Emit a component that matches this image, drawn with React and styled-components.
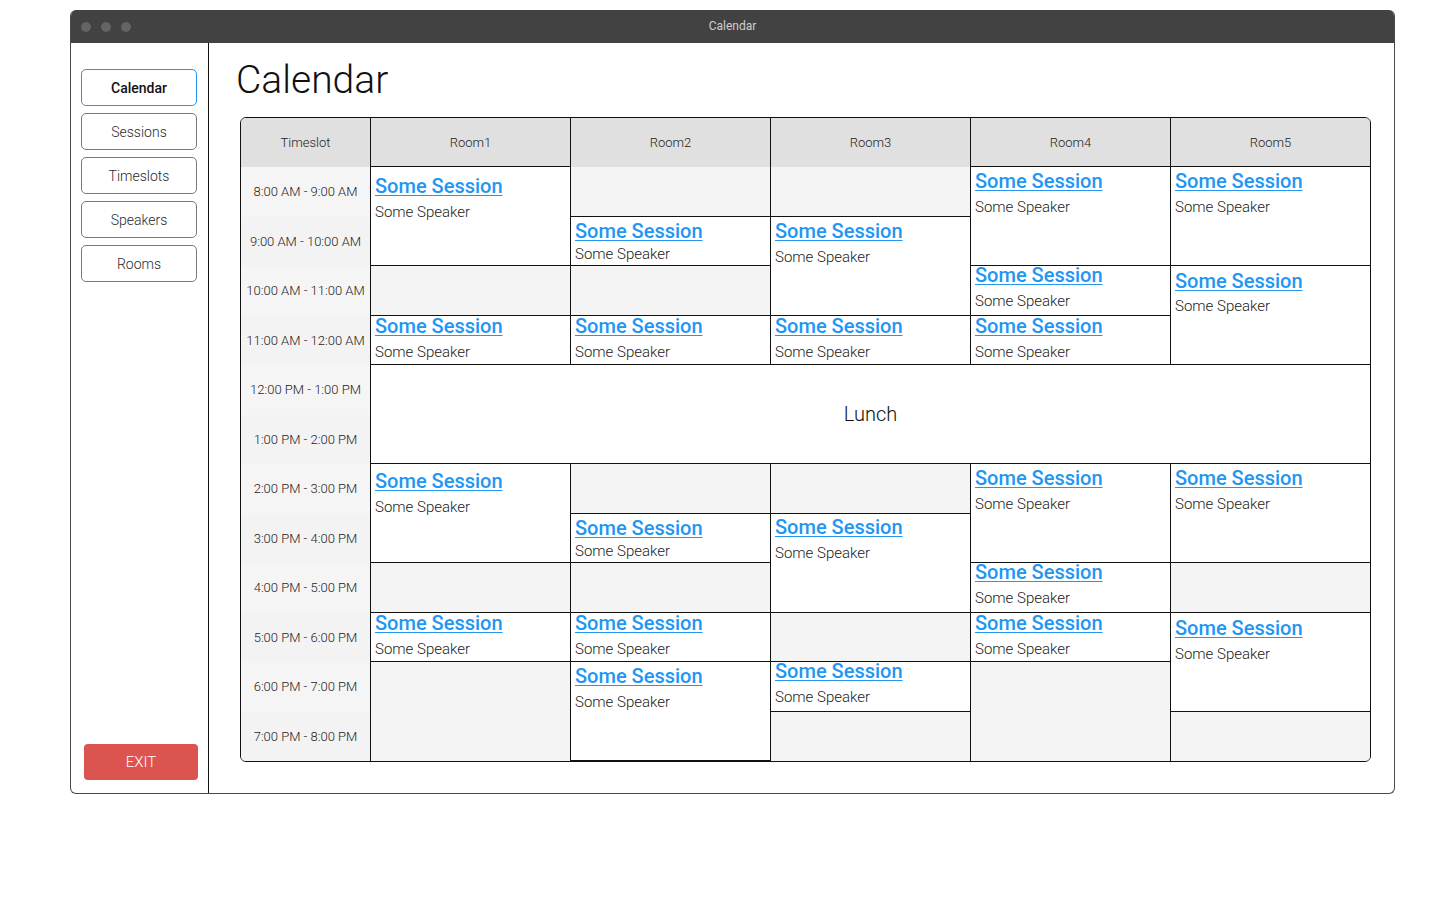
import React from "react";
import styled, { createGlobalStyle } from "styled-components";

const Global = createGlobalStyle`
  html, body { margin: 0; padding: 0; background: #fff; }
  body { font-family: Roboto, "Liberation Sans", sans-serif; }
  * { box-sizing: border-box; }
`;

const Window = styled.div`
  margin: 10px 0 0 70px;
  width: 1325px;
  height: 784px;
  border: 1px solid #4a4a4a;
  border-top: none;
  border-radius: 6px;
  display: flex;
  flex-direction: column;
  overflow: hidden;
`;

const TitleBar = styled.div`
  height: 33px;
  background: #424242;
  display: flex;
  align-items: center;
  position: relative;
  padding-left: 11px;
  gap: 10px;
  margin: 0 -1px;
`;

const Dot = styled.span`
  width: 10px;
  height: 10px;
  border-radius: 50%;
  background: #646464;
`;

const WinTitle = styled.div`
  position: absolute;
  left: 0;
  right: 0;
  top: 9px;
  text-align: center;
  font-size: 12px;
  line-height: 14px;
  color: #cfcfcf;
  font-weight: 400;
  pointer-events: none;
`;

const Body = styled.div`
  flex: 1;
  display: flex;
  min-height: 0;
`;

const Sidebar = styled.nav`
  width: 138px;
  border-right: 1px solid #111;
  display: flex;
  flex-direction: column;
  padding: 26px 0 13px 10px;
  gap: 7px;
`;

const NavButton = styled.button`
  width: 116px;
  height: 37px;
  border: 1px solid ${(p) => (p.$active ? "#2196f3" : "#7a7a7a")};
  border-radius: 5px;
  background: #fff;
  font-family: Roboto, "Liberation Sans", sans-serif;
  font-size: 14px;
  font-weight: ${(p) => (p.$active ? 500 : 300)};
  color: ${(p) => (p.$active ? "#111" : "#2a2a2a")};
  cursor: pointer;
  padding: 0;
`;

const ExitButton = styled.button`
  margin-top: auto;
  margin-left: 3px;
  width: 114px;
  height: 36px;
  border: none;
  border-radius: 4px;
  background: #db5450;
  color: #fff;
  font-family: Roboto, "Liberation Sans", sans-serif;
  font-size: 15px;
  font-weight: 300;
  cursor: pointer;
`;

const Main = styled.main`
  flex: 1;
  padding: 14px 0 0 31px;
`;

const PageTitle = styled.h1`
  margin: 0 0 14px -4px;
  font-size: 39px;
  line-height: 46px;
  font-weight: 300;
  color: #111;
`;

const Table = styled.div`
  display: grid;
  grid-template-columns: 129px repeat(5, 200px);
  grid-template-rows: 49px repeat(12, 49.5px);
  width: 1131px;
  border: 1px solid #111;
  border-radius: 6px;
  overflow: hidden;
  background: #f4f4f4;
`;

const HeadCell = styled.div`
  background: #e0e0e0;
  display: flex;
  align-items: center;
  justify-content: center;
  font-size: 13px;
  font-weight: 300;
  color: #222;
  border-left: ${(p) => (p.$room ? "1px solid #111" : "none")};
  grid-row: 1;
`;

const SlotCell = styled.div`
  grid-column: 1;
  grid-row: ${(p) => p.$row};
  display: flex;
  align-items: center;
  justify-content: center;
  font-size: 13px;
  font-weight: 300;
  color: #1e1e1e;
  background: ${(p) => (p.$odd ? "#f3f3f3" : "#f5f5f5")};
`;

const EmptyCell = styled.div`
  grid-column: ${(p) => p.$col};
  grid-row: ${(p) => p.$row} / span ${(p) => p.$span};
  border-left: 1px solid #111;
  background: #f4f4f4;
`;

const SessionCell = styled.div`
  grid-column: ${(p) => p.$col};
  grid-row: ${(p) => p.$row} / span ${(p) => p.$span};
  margin-top: -1px;
  border: 1px solid #111;
  border-right: none;
  background: #fff;
  padding: ${(p) => p.$pad}px 4px 0 4px;
  display: flex;
  flex-direction: column;
  align-items: flex-start;
  z-index: 1;
`;

const SessionLink = styled.a`
  font-size: 20px;
  line-height: 18px;
  font-weight: 500;
  color: #2196f3;
  text-decoration: underline;
  text-decoration-thickness: 1px;
  text-underline-offset: 2px;
  cursor: pointer;
`;

const Speaker = styled.div`
  font-size: 15px;
  line-height: 20px;
  font-weight: 300;
  color: #222;
  margin-top: ${(p) => p.$gap - 19}px;
`;

const LunchCell = styled.div`
  grid-column: 2 / 7;
  grid-row: 6 / span 2;
  margin-top: -1px;
  border: 1px solid #111;
  border-right: none;
  background: #fff;
  display: flex;
  align-items: center;
  justify-content: center;
  font-size: 20px;
  font-weight: 300;
  color: #111;
  z-index: 2;
`;

const slots = [
  "8:00 AM - 9:00 AM",
  "9:00 AM - 10:00 AM",
  "10:00 AM - 11:00 AM",
  "11:00 AM - 12:00 AM",
  "12:00 PM - 1:00 PM",
  "1:00 PM - 2:00 PM",
  "2:00 PM - 3:00 PM",
  "3:00 PM - 4:00 PM",
  "4:00 PM - 5:00 PM",
  "5:00 PM - 6:00 PM",
  "6:00 PM - 7:00 PM",
  "7:00 PM - 8:00 PM",
];

const rooms = ["Room1", "Room2", "Room3", "Room4", "Room5"];

// [type, startSlot, span, titleOffset, speakerGap]
const schedule = [
  [["s", 0, 2, 20, 26], ["e", 2, 1], ["s", 3, 1, 11, 26], ["s", 6, 2, 18, 26], ["e", 8, 1], ["s", 9, 1, 11, 26], ["e", 10, 2]],
  [["e", 0, 1], ["s", 1, 1, 15, 23], ["e", 2, 1], ["s", 3, 1, 11, 26], ["e", 6, 1], ["s", 7, 1, 15, 23], ["e", 8, 1], ["s", 9, 1, 11, 26], ["s", 10, 2, 15, 26]],
  [["e", 0, 1], ["s", 1, 2, 15, 26], ["s", 3, 1, 11, 26], ["e", 6, 1], ["s", 7, 2, 14, 26], ["e", 9, 1], ["s", 10, 1, 10, 26], ["e", 11, 1]],
  [["s", 0, 2, 15, 26], ["s", 2, 1, 10, 26], ["s", 3, 1, 11, 26], ["s", 6, 2, 15, 26], ["s", 8, 1, 10, 26], ["s", 9, 1, 11, 26], ["e", 10, 2]],
  [["s", 0, 2, 15, 26], ["s", 2, 2, 16, 25], ["s", 6, 2, 15, 26], ["e", 8, 1], ["s", 9, 2, 16, 26], ["e", 11, 1]],
];

const navItems = ["Calendar", "Sessions", "Timeslots", "Speakers", "Rooms"];

export default function App() {
  return (
    <>
      <Global />
      <Window>
        <TitleBar>
          <Dot />
          <Dot />
          <Dot />
          <WinTitle>Calendar</WinTitle>
        </TitleBar>
        <Body>
          <Sidebar>
            {navItems.map((n, i) => (
              <NavButton key={n} $active={i === 0}>
                {n}
              </NavButton>
            ))}
            <ExitButton>EXIT</ExitButton>
          </Sidebar>
          <Main>
            <PageTitle>Calendar</PageTitle>
            <Table>
              <HeadCell>Timeslot</HeadCell>
              {rooms.map((r) => (
                <HeadCell key={r} $room>
                  {r}
                </HeadCell>
              ))}
              {slots.map((s, i) => (
                <SlotCell key={s} $row={i + 2} $odd={i % 2 === 1}>
                  {s}
                </SlotCell>
              ))}
              {schedule.map((col, ci) =>
                col.map(([t, start, span, off, gap]) =>
                  t === "s" ? (
                    <SessionCell
                      key={`${ci}-${start}`}
                      $col={ci + 2}
                      $row={start + 2}
                      $span={span}
                      $pad={off - 10}
                    >
                      <SessionLink>Some Session</SessionLink>
                      <Speaker $gap={gap}>Some Speaker</Speaker>
                    </SessionCell>
                  ) : (
                    <EmptyCell key={`${ci}-${start}`} $col={ci + 2} $row={start + 2} $span={span} />
                  )
                )
              )}
              <LunchCell>Lunch</LunchCell>
            </Table>
          </Main>
        </Body>
      </Window>
    </>
  );
}
